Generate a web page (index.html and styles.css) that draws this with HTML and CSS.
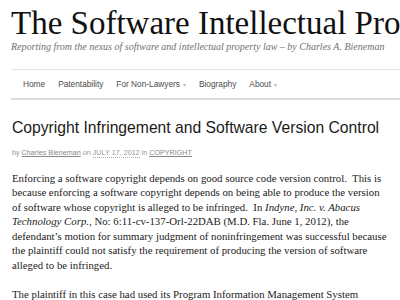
FILE: index.html
```html
<!DOCTYPE html>
<html lang="en">
<head>
<meta charset="utf-8">
<title>Copyright Infringement and Software Version Control</title>
<link rel="stylesheet" href="styles.css">
</head>
<body>
<header class="site-header">
  <h1 class="site-title">The Software Intellectual Property Blog</h1>
  <p class="site-tagline">Reporting from the nexus of software and intellectual property law – by Charles A. Bieneman</p>
</header>
<nav class="main-nav">
  <a class="nav-item" href="#">Home</a>
  <a class="nav-item" href="#">Patentability</a>
  <a class="nav-item" href="#">For Non-Lawyers<span class="caret">▾</span></a>
  <a class="nav-item" href="#">Biography</a>
  <a class="nav-item" href="#">About<span class="caret">▾</span></a>
</nav>
<main class="content">
  <article class="post">
    <h2 class="post-title">Copyright Infringement and Software Version Control</h2>
    <div class="post-meta">by <a class="meta-link" href="#">Charles Bieneman</a> on <span class="meta-date">JULY 17, 2012</span> in <a class="meta-link" href="#">COPYRIGHT</a></div>
    <div class="post-body">
      <p>Enforcing a software copyright depends on good source code version control.&nbsp; This is because enforcing a software copyright depends on being able to produce the version of software whose copyright is alleged to be infringed.&nbsp; In <em>Indyne, Inc. v. Abacus Technology Corp.</em>, No: 6:11-cv-137-Orl-22DAB (M.D. Fla. June 1, 2012), the defendant’s motion for summary judgment of noninfringement was successful because the plaintiff could not satisfy the requirement of producing the version of software alleged to be infringed.</p>
      <p>The plaintiff in this case had used its Program Information Management System (“PIMS”) software to provide services to a customer.</p>
    </div>
  </article>
</main>
</body>
</html>
```

FILE: styles.css
```css
html, body {
  margin: 0;
  padding: 0;
  background: #fff;
  overflow: hidden;
}
body {
  width: 400px;
  height: 300px;
  font-family: "Liberation Serif", "Times New Roman", serif;
}
.site-header {
  padding-left: 11px;
}
.site-title {
  margin: 5px 0 0;
  font-family: "Liberation Serif", "Times New Roman", serif;
  font-weight: normal;
  font-size: 33px;
  line-height: 36px;
  color: #111;
  white-space: nowrap;
}
.site-tagline {
  margin: 0;
  font-style: italic;
  font-size: 10px;
  line-height: 12px;
  color: #707070;
  white-space: nowrap;
}
.main-nav {
  margin: 16px 0 0 11px;
  border-top: 1px solid #e3e3e3;
  border-bottom: 2px solid #dcdcdc;
  height: 28px;
  display: flex;
  align-items: center;
  gap: 13px;
  padding-left: 12px;
  font-family: "Liberation Sans", Arial, sans-serif;
  font-size: 8.3px;
  line-height: 28px;
}
.nav-item {
  color: #4a4a4a;
  text-decoration: none;
  white-space: nowrap;
}
.caret {
  color: #bbb;
  font-size: 6px;
  margin-left: 3px;
}
.content {
  padding: 0 12px;
}
.post-title {
  margin: 18px 0 0;
  font-family: "Liberation Sans", Arial, sans-serif;
  font-weight: normal;
  font-size: 15.7px;
  line-height: 20px;
  color: #1a1a1a;
  white-space: nowrap;
}
.post-meta {
  margin-top: 10px;
  font-family: "Liberation Sans", Arial, sans-serif;
  font-size: 7.2px;
  line-height: 10px;
  color: #999;
}
.meta-link {
  color: #888;
  text-decoration: underline;
}
.meta-date {
  color: #999;
  border-bottom: 1px dotted #aaa;
}
.post-body {
  margin-top: 12.5px;
  width: 376px;
  font-size: 10.8px;
  line-height: 14.6px;
  color: #222;
}
.post-body p {
  margin: 0 0 14.6px;
}
```
